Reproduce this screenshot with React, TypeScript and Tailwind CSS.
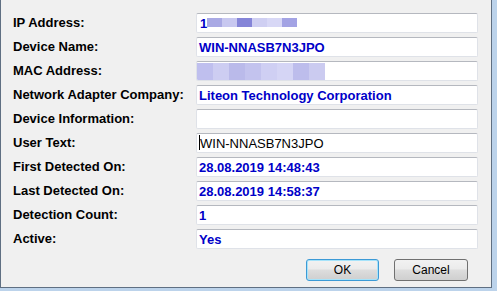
type Row = { label: string; value?: string; kind?: "ip" | "mac" | "user" };

const rows: Row[] = [
  { label: "IP Address:", kind: "ip" },
  { label: "Device Name:", value: "WIN-NNASB7N3JPO" },
  { label: "MAC Address:", kind: "mac" },
  { label: "Network Adapter Company:", value: "Liteon Technology Corporation" },
  { label: "Device Information:", value: "" },
  { label: "User Text:", kind: "user" },
  { label: "First Detected On:", value: "28.08.2019 14:48:43" },
  { label: "Last Detected On:", value: "28.08.2019 14:58:37" },
  { label: "Detection Count:", value: "1" },
  { label: "Active:", value: "Yes" },
];

// redacted pixel blocks as they appear in the capture
const ipBlocks = ["#a9a9e4", "#c8c8f0", "#8585d8", "#cfcff2", "#d8d8f6", "#a3a3e4"];
const macBlocks = ["#bfbfee", "#cdcdf2", "#babaea", "#c3c3ee", "#cfcff3", "#d5d5f5", "#bdbdec", "#cbcbf0"];

function Field({ row }: { row: Row }) {
  return (
    <div className="relative h-[20px] rounded-[2px] border border-[#dfe2e8] border-t-[#b5b8bf] bg-white overflow-hidden flex items-center">
      {row.kind === "ip" && (
        <div className="flex items-center pl-[3px] h-full">
          <span className="text-[13px] font-bold text-[#0000c8] leading-none">1</span>
          <div className="flex h-[9px] -mt-[1px]">
            {ipBlocks.map((c, i) => (
              <div key={i} className="w-[15px] h-full" style={{ backgroundColor: c }} />
            ))}
          </div>
        </div>
      )}
      {row.kind === "mac" && (
        <div className="flex h-[17px] self-start mt-[1px]">
          {macBlocks.map((c, i) => (
            <div key={i} className="w-[16px] h-full" style={{ backgroundColor: c }} />
          ))}
        </div>
      )}
      {row.kind === "user" && (
        <>
          <span className="absolute left-[2px] top-[1px] w-px h-[15px] bg-black" />
          <span className="pl-[3px] text-[13px] text-black leading-none">WIN-NNASB7N3JPO</span>
        </>
      )}
      {!row.kind && (
        <span className="pl-[2px] text-[13px] font-bold text-[#0000c8] leading-none">{row.value}</span>
      )}
    </div>
  );
}

export default function App() {
  return (
    <div className="w-[497px] h-[291px] bg-[#bcd3eb] font-['Liberation_Sans',Arial,sans-serif]">
      <div className="w-[492px] h-[288px] bg-[#f0f0f0] border-l border-r border-b border-[#5f6f82] pl-[12px] pt-[13px] flex flex-col">
        <div className="grid grid-cols-[183px_282px] gap-y-[4px]">
          {rows.map((row) => (
            <div key={row.label} className="contents">
              <div className="h-[20px] flex items-center text-[13px] font-bold text-black">{row.label}</div>
              <Field row={row} />
            </div>
          ))}
        </div>
        <div className="mt-[10px] flex justify-end gap-[15px] w-[455px]">
          <button className="w-[73px] h-[22px] rounded-[3px] border border-[#3c9ad6] shadow-[inset_0_0_0_1px_#a6e3fa] bg-[linear-gradient(#f2f2f2,#ebebeb_45%,#dddddd_50%,#cfcfcf)] text-[12px] text-black">
            OK
          </button>
          <button className="w-[74px] h-[22px] rounded-[3px] border border-[#707070] bg-[linear-gradient(#f2f2f2,#ebebeb_45%,#dddddd_50%,#cfcfcf)] text-[12px] text-black">
            Cancel
          </button>
        </div>
      </div>
    </div>
  );
}
